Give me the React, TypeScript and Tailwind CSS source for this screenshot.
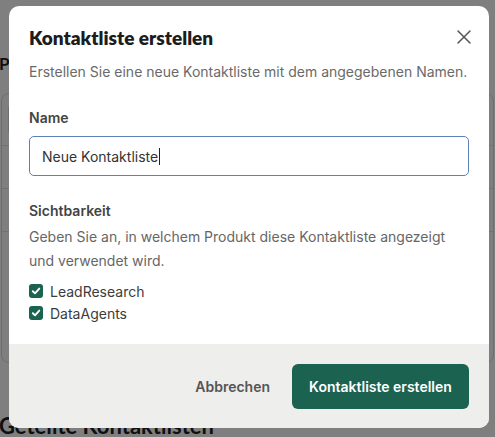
import React from "react";

function CheckBox() {
  return (
    <span className="flex h-[14px] w-[14px] items-center justify-center rounded-[3px] bg-[#1a6350]">
      <svg width="10" height="10" viewBox="0 0 10 10" fill="none">
        <path d="M1.8 5.2 4 7.3 8.3 2.6" stroke="#fff" strokeWidth="1.9" strokeLinecap="round" strokeLinejoin="round" />
      </svg>
    </span>
  );
}

export default function App() {
  return (
    <div
      className="relative h-[437px] w-[495px] overflow-hidden bg-white"
      style={{ fontFamily: "Inter, 'Noto Sans', sans-serif" }}
    >
      {/* page underneath the dialog */}
      <div className="flex flex-col">
        <div className="h-[55px]" />
        <h2 className="ml-[-1px] text-[17px] font-bold leading-[18px] text-[#1f1f1f]" style={{ fontFamily: "Lato, sans-serif" }}>
          P
        </h2>
        <div className="mx-[1px] mt-[20px] flex h-[270px] flex-col rounded-lg border border-[#dcdcdc]">
          <div className="flex h-[52px] items-center border-b border-[#e4e4e4] px-[6px]">
            <div className="h-[33px] w-[200px] rounded-md border border-[#dcdcdc]" />
          </div>
          <div className="h-[43px] border-b border-[#e4e4e4]" />
          <div className="h-[43px] border-b border-[#e4e4e4]" />
        </div>
        <div className="h-[51px]" />
        <h2 className="ml-[-1px] text-[22px] font-bold leading-[24px] text-[#1f1f1f]" style={{ fontFamily: "Lato, sans-serif" }}>
          Geteilte Kontaktlisten
        </h2>
      </div>

      {/* backdrop */}
      <div className="absolute inset-0 bg-black/50" />

      {/* dialog */}
      <div className="absolute left-[9px] top-[6px] flex h-[422px] w-[480px] flex-col overflow-hidden rounded-[10px] bg-white">
        <button className="absolute right-[18px] top-[24px] flex h-[14px] w-[14px] items-center justify-center">
          <svg width="14" height="14" viewBox="0 0 14 14" fill="none">
            <path d="M1 1 13 13M13 1 1 13" stroke="#555" strokeWidth="1.5" strokeLinecap="round" />
          </svg>
        </button>

        <div className="flex flex-1 flex-col px-5 pt-5">
          <h1
            className="text-[19px] font-extrabold leading-[24px] text-[#1c1c1c]"
            style={{ fontFamily: "Lato, sans-serif" }}
          >
            Kontaktliste erstellen
          </h1>
          <p className="mt-3 text-[14px] leading-[20px] text-[#6a6a6a]">
            Erstellen Sie eine neue Kontaktliste mit dem angegebenen Namen.
          </p>

          <label className="mt-[26px] text-[14px] font-semibold leading-[20px] text-[#444]">Name</label>
          <div className="mt-2 flex h-[40px] items-center rounded-[5px] border border-[#5c80b8] px-[12px]">
            <span className="text-[14px] text-[#333]">Neue Kontaktliste</span>
            <span className="ml-[1px] h-[17px] w-px bg-[#222]" />
          </div>

          <div className="mt-[25px] text-[14px] font-semibold leading-[20px] text-[#444]">Sichtbarkeit</div>
          <p className="mt-1 text-[14px] leading-[24px] text-[#666]">
            Geben Sie an, in welchem Produkt diese Kontaktliste angezeigt und verwendet wird.
          </p>

          <div className="mt-[7px] flex flex-col">
            <div className="flex h-[22px] items-center gap-[7px]">
              <CheckBox />
              <span className="text-[14px] text-[#3c3c3c]">LeadResearch</span>
            </div>
            <div className="flex h-[22px] items-center gap-[7px]">
              <CheckBox />
              <span className="text-[14px] text-[#3c3c3c]">DataAgents</span>
            </div>
          </div>
        </div>

        <div className="flex h-[84px] items-center justify-end gap-[22px] bg-[#eeeeec] px-5">
          <button className="text-[14px] font-semibold text-[#555]">Abbrechen</button>
          <button className="flex h-[45px] w-[177px] items-center justify-center rounded-[6px] bg-[#1b6350] text-[14px] font-semibold text-white">
            Kontaktliste erstellen
          </button>
        </div>
      </div>
    </div>
  );
}
